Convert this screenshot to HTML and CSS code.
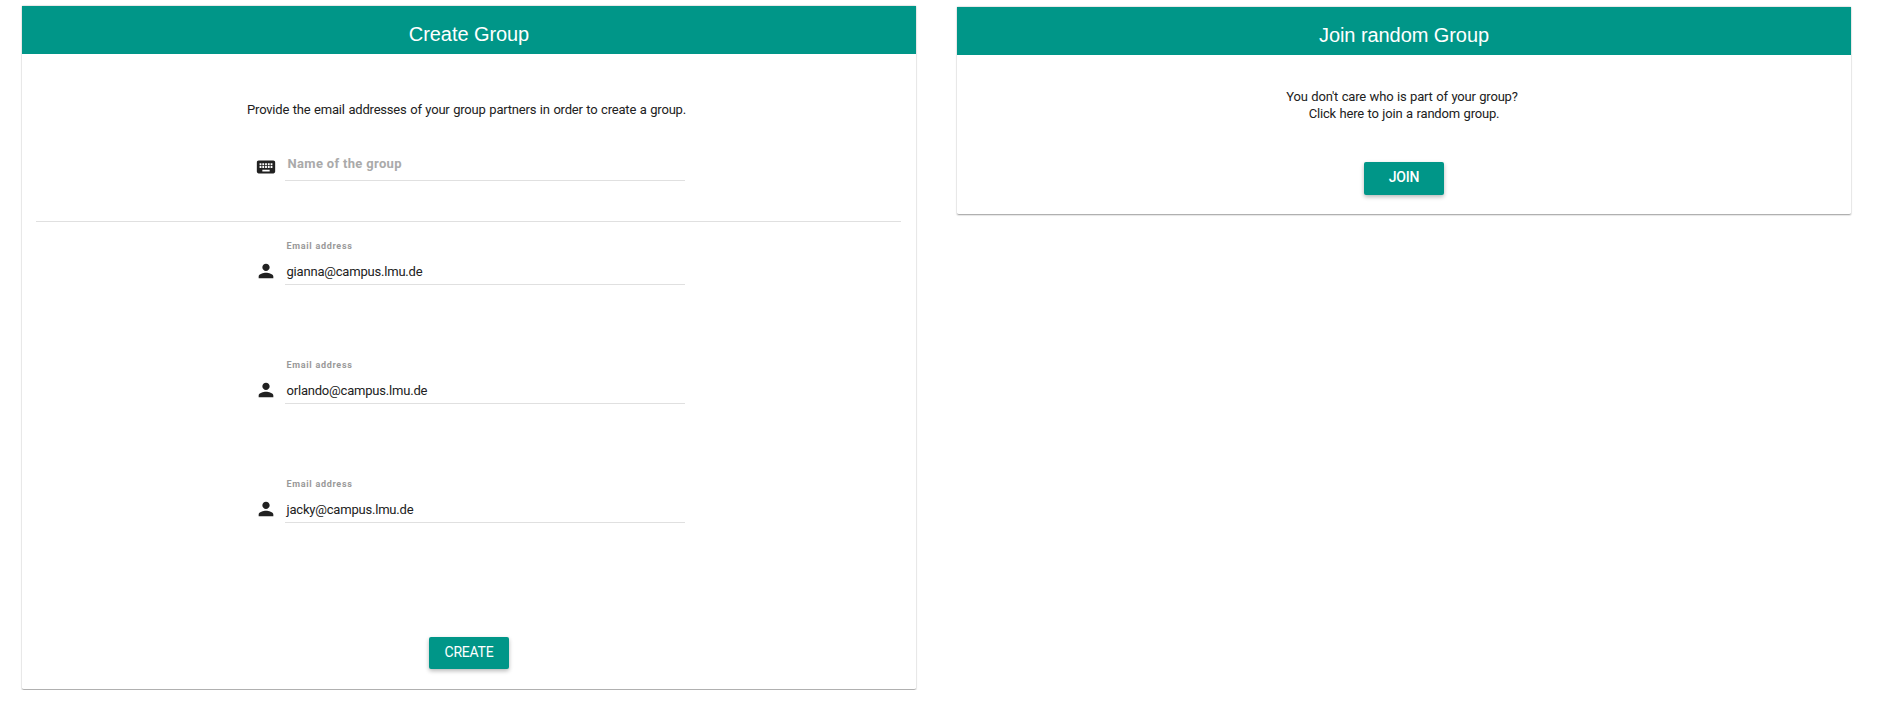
FILE: index.html
```html
<!DOCTYPE html>
<html lang="en">
<head>
<meta charset="utf-8">
<title>Groups</title>
<link rel="stylesheet" href="styles.css">
</head>
<body>
<svg class="sprite" aria-hidden="true">
  <symbol id="keyboard" viewBox="0 0 24 24"><path d="M20 5H4c-1.100 0-1.990.9-1.990 2L2 17c0 1.100.9 2 2 2h16c1.100 0 2-.9 2-2V7c0-1.100-.9-2-2-2zm-9 3h2v2h-2V8zm0 3h2v2h-2v-2zM8 8h2v2H8V8zm0 3h2v2H8v-2zm-1 2H5v-2h2v2zm0-3H5V8h2v2zm9 7H8v-2h8v2zm0-4h-2v-2h2v2zm0-3h-2V8h2v2zm3 3h-2v-2h2v2zm0-3h-2V8h2v2z"/></symbol>
  <symbol id="person" viewBox="0 0 24 24"><path d="M12 12c2.210 0 4-1.790 4-4s-1.790-4-4-4-4 1.790-4 4 1.790 4 4 4zm0 2c-2.670 0-8 1.340-8 4v2h16v-2c0-2.660-5.330-4-8-4z"/></symbol>
</svg>
<main class="page">
  <section class="card card-create">
    <h1 class="card-title">Create Group</h1>
    <p class="intro">Provide the email addresses of your group partners in order to create a group.</p>
    <div class="field field-name">
      <svg class="icon"><use href="#keyboard"/></svg>
      <div class="input name-input"><span class="placeholder">Name of the group</span></div>
    </div>
    <hr class="divider">
    <div class="members">
      <div class="field">
        <svg class="icon"><use href="#person"/></svg>
        <div class="input"><span class="label">Email address</span><span class="value">gianna@campus.lmu.de</span></div>
      </div>
      <div class="field">
        <svg class="icon"><use href="#person"/></svg>
        <div class="input"><span class="label">Email address</span><span class="value">orlando@campus.lmu.de</span></div>
      </div>
      <div class="field">
        <svg class="icon"><use href="#person"/></svg>
        <div class="input"><span class="label">Email address</span><span class="value">jacky@campus.lmu.de</span></div>
      </div>
    </div>
    <button class="button button-create">CREATE</button>
  </section>
  <section class="card card-join">
    <h1 class="card-title">Join random Group</h1>
    <p class="intro"><span class="question">You don't care who is part of your group?</span><br>Click here to join a random group.</p>
    <button class="button button-join">JOIN</button>
  </section>
</main>
</body>
</html>
```

FILE: styles.css
```css
* { box-sizing: border-box; }
body { margin: 0; background: #fff; color: #212121; font-family: Roboto, "Liberation Sans", sans-serif; font-size: 13px; }
.sprite { display: none; }
.page { display: flex; align-items: flex-start; gap: 41px; padding: 6px 0 0 22px; }
.card { display: flex; flex-direction: column; align-items: center; width: 894px; flex: none; background: #fff; border-bottom: 1px solid #b0b0b0; border-radius: 2px; box-shadow: 0 0 1px 1px rgba(0,0,0,.1); }
.card-create { height: 684px; }
.card-join { height: 208px; margin-top: 1px; }
.card-title { margin: 0; width: 100%; height: 48px; padding-top: 16px; background: #009688; color: #fff; font: 400 20px/24px "Liberation Sans", Arial, sans-serif; letter-spacing: -.07px; text-align: center; }
.intro { margin: 47px 0 0; line-height: 17px; letter-spacing: -.2px; word-spacing: .6px; white-space: nowrap; text-align: center; }
.card-create .intro { padding-right: 5px; }
.card-join .intro { margin-top: 33px; }
.question { margin-right: 4px; }
.field { display: flex; width: 430px; height: 119px; gap: 8px; }
.icon { width: 22px; height: 22px; margin-top: 21px; fill: #212121; flex: none; }
.input { display: flex; flex-direction: column; width: 400px; height: 46px; border-bottom: 1px solid #e0e0e0; padding-left: 2px; }
.members, .field-name { margin-left: 1px; }
.field-name { height: 103px; }
.name-input { height: 63px; padding: 37px 0 0 3px; }
.field-name .icon { margin-top: 38px; }
.placeholder { color: #aaa; font-weight: 700; line-height: 17px; letter-spacing: .33px; }
.divider { margin: 0 1px 0 0; width: 865px; height: 1px; border: 0; background: #e0e0e0; }
.members { padding-top: 17px; }
.label { color: #999; font-size: 9px; font-weight: 700; line-height: 12px; letter-spacing: .7px; margin-top: 1px; }
.value { line-height: 17px; margin-top: 11px; letter-spacing: -.2px; }
.button { border: 0; padding: 0 0 3px; width: 80px; border-radius: 2px; background: #009688; color: #fff; font: 400 14px/17px Roboto, sans-serif; letter-spacing: -.3px; box-shadow: 0 2px 4px rgba(0,0,0,.28); }
.button-create { height: 32px; margin-top: 41px; padding-bottom: 1px; letter-spacing: -.2px; }
.button-join { height: 33px; margin-top: 40px; padding-bottom: 2px; font-weight: 500; letter-spacing: -.2px; }
```
